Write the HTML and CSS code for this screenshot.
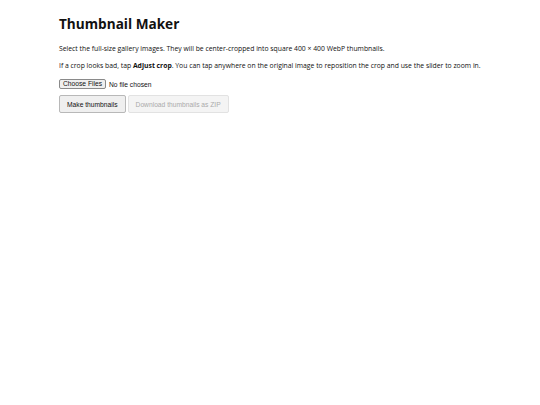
FILE: index.html
```html
<!DOCTYPE html>
<html>
<head>
<meta charset="utf-8">
<title>Thumbnail Maker</title>
<link rel="stylesheet" href="styles.css">
</head>
<body>
<main class="page">
  <h1 class="title">Thumbnail Maker</h1>
  <p class="note">Select the full-size gallery images. They will be center-cropped into square 400 × 400 WebP thumbnails.</p>
  <p class="note">If a crop looks bad, tap <b>Adjust crop</b>. You can tap anywhere on the original image to reposition the crop and use the slider to zoom in.</p>
  <div class="file-row"><span class="file-btn">Choose Files</span><span class="file-text">No file chosen</span></div>
  <div class="actions">
    <button class="btn">Make thumbnails</button>
    <button class="btn" disabled>Download thumbnails as ZIP</button>
  </div>
</main>
</body>
</html>
```
FILE: styles.css
```css
html, body { margin: 0; padding: 0; background: #fff; }
.page {
  padding: 14px 10px 14px 59px;
  font-family: "Open Sans", "Noto Sans", sans-serif;
  color: #111;
}
.title {
  font-size: 13.6px;
  font-weight: 700;
  margin: 0 0 10px;
  line-height: 20px;
}
.note {
  font-size: 6.82px;
  line-height: 10px;
  margin: 0 0 7px;
  white-space: nowrap;
}
.note b { font-weight: 700; }
.file-row {
  display: flex;
  align-items: center;
  gap: 3px;
  margin-top: 8px;
  font-family: "Liberation Sans", Arial, sans-serif;
  font-size: 6.7px;
}
.file-btn {
  border: 1px solid #8a8a8a;
  background: #efefef;
  border-radius: 2px;
  padding: 0 3px;
  line-height: 8px;
}
.actions {
  display: flex;
  gap: 2px;
  margin-top: 6px;
}
.btn {
  font-family: "Liberation Sans", Arial, sans-serif;
  font-size: 6.7px;
  height: 18px;
  padding: 0 7px;
  border: 1px solid #b8b8b8;
  background: #efefef;
  color: #111;
  border-radius: 2px;
}
.btn:disabled {
  color: #aaa;
  border-color: #e2e2e2;
  background: #f4f4f4;
}
```
